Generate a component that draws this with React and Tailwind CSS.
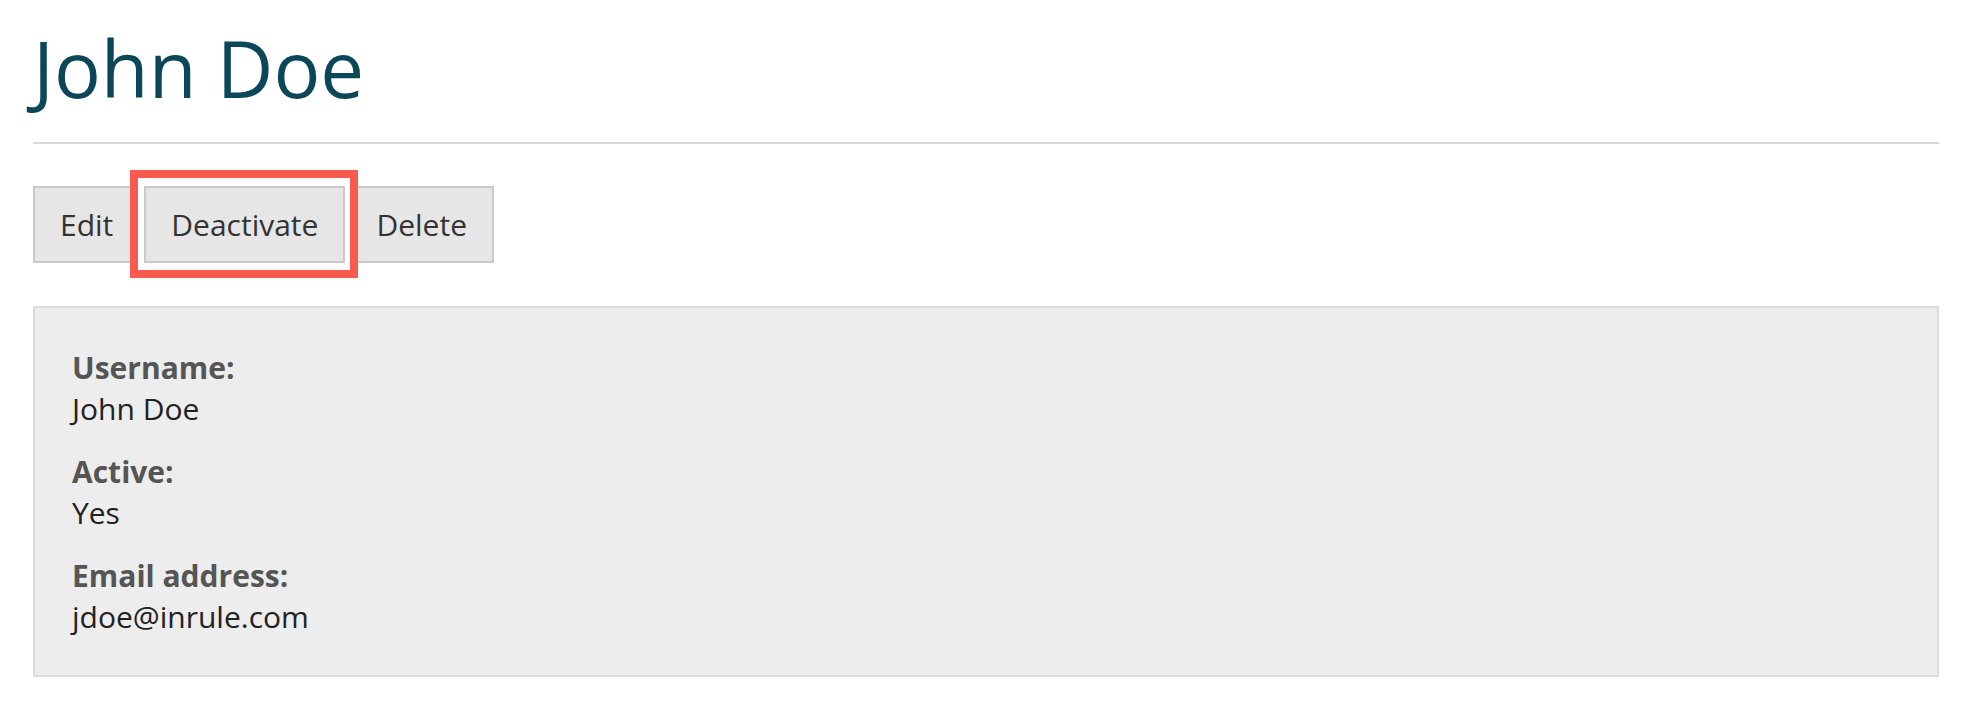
export default function App() {
  const font = { fontFamily: '"Open Sans", "Noto Sans", sans-serif' };
  return (
    <div className="min-h-[712px] bg-white px-[33px]" style={font}>
      <h1 className="pt-[29px] text-[78px] leading-[78px] font-normal text-[#0b4659]">
        John Doe
      </h1>
      <div className="mt-[35px] h-[2px] bg-[#d9d9d9]" />
      <div className="mt-[42px] flex items-start gap-[4px] text-[30px] leading-[41px] text-[#333]">
        <button className="border-2 border-[#c9c9c9] bg-[#e6e6e6] px-[25px] py-[16px]">Edit</button>
        <div className="relative">
          <div className="absolute -left-[14px] -top-[16px] -right-[13px] -bottom-[15px] z-[5] border-[8px] border-[#f85a4e] bg-white" />
          <button className="relative z-10 border-2 border-[#c9c9c9] bg-[#e6e6e6] px-[25px] py-[16px]">Deactivate</button>
        </div>
        <button className="border-2 border-[#c9c9c9] bg-[#e6e6e6] px-[25px] py-[16px]">Delete</button>
      </div>
      <div className="mt-[43px] border-2 border-[#dcdcdc] bg-[#ededed] px-[37px] pt-[39px] pb-[38px] text-[30px] leading-[41px]">
        <div className="flex flex-col gap-[22px]">
          <div>
            <div className="font-bold text-[#555]">Username:</div>
            <div className="text-[#222]">John Doe</div>
          </div>
          <div>
            <div className="font-bold text-[#555]">Active:</div>
            <div className="text-[#222]">Yes</div>
          </div>
          <div>
            <div className="font-bold text-[#555]">Email address:</div>
            <div className="text-[#222]">jdoe@inrule.com</div>
          </div>
        </div>
      </div>
    </div>
  );
}
